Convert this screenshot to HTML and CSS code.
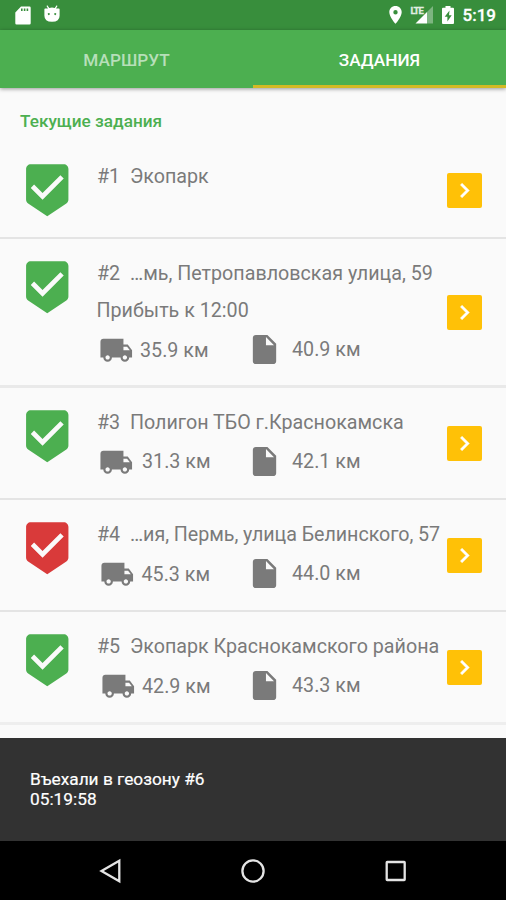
FILE: index.html
```html
<!DOCTYPE html>
<html lang="ru">
<head>
<meta charset="utf-8">
<title>Задания</title>
<link rel="stylesheet" href="styles.css">
</head>
<body>
<svg class="defs" width="0" height="0">
  <symbol id="badge" viewBox="0 0 24 24"><path d="M19 1H5c-1.1 0-1.99.9-1.99 2L3 15.93c0 .69.35 1.3.88 1.66L12 23l8.11-5.41c.53-.36.88-.97.88-1.66L21 3c0-1.1-.9-2-2-2zm-9 15l-5-5 1.41-1.41L10 13.17l7.59-7.59L19 7l-9 9z"/></symbol>
  <symbol id="truck" viewBox="0 0 24 24"><path d="M20 8h-3V4H3c-1.100 0-2 .9-2 2v11h2c0 1.660 1.340 3 3 3s3-1.340 3-3h6c0 1.660 1.340 3 3 3s3-1.340 3-3h2v-5l-3-4zM6 18.500c-.83 0-1.500-.67-1.500-1.500s.67-1.500 1.500-1.500 1.500.67 1.500 1.500-.67 1.500-1.500 1.500zm13.500-9l1.960 2.500H17V9.500h2.500zm-1.500 9c-.83 0-1.500-.67-1.500-1.500s.67-1.500 1.500-1.500 1.500.67 1.500 1.500-.67 1.500-1.500 1.500z"/></symbol>
  <symbol id="file" viewBox="0 0 24 24"><path d="M6 2c-1.100 0-1.990.9-1.990 2L4 20c0 1.100.89 2 1.990 2H18c1.100 0 2-.9 2-2V8l-6-6H6zm7 7V3.500L18.500 9H13z"/></symbol>
  <symbol id="chevron" viewBox="0 0 24 24"><path d="M10 6L8.590 7.410 13.170 12l-4.580 4.590L10 18l6-6z"/></symbol>
</svg>

<header class="statusbar">
  <div class="status-group status-left">
    <svg width="16" height="19" viewBox="0 0 16 19"><path fill-rule="evenodd" d="M6 0.500h8.500q1.200 0 1.200 1.200v15.600q0 1.200-1.200 1.200h-13q-1.200 0-1.200-1.200V6.500zM6 2.500v2.400h1.600V2.500zM8.800 2.500v2.400h1.600V2.500zM11.600 2.500v2.400h1.600V2.500z"/></svg>
    <svg width="16" height="18" viewBox="0 0 16 18"><path fill-rule="evenodd" d="M3.300 0.300l2 2.700q2.700-.8 5.400 0l2-2.700.8.600-1.500 2.500h2.800q.8 0 .8.800v6.500q0 6-7.600 6T.4 10.700V4.200q0-.8.8-.8H4L2.500.9zM4.800 8a1 1 0 1 0 .01 0zM11.200 8a1 1 0 1 0 .01 0z"/></svg>
  </div>
  <div class="status-group status-right">
    <svg class="pin" width="13" height="18" viewBox="0 0 13 18"><path fill-rule="evenodd" d="M6.500 0C2.900 0 .3 2.700.3 6.200c0 4.600 6.200 11.600 6.200 11.600s6.200-7 6.200-11.600C12.700 2.700 10.100 0 6.500 0zm0 4a2.200 2.200 0 1 1 0 4.400 2.200 2.200 0 0 1 0-4.400z"/></svg>
    <div class="signal">
      <svg width="22" height="18" viewBox="0 0 22 18"><path opacity=".35" d="M22 0v17.500H16V6z"/><path d="M4.500 17.500L16 6v11.500z"/></svg>
      <span class="lte">LTE</span>
    </div>
    <svg class="battery" width="12" height="18" viewBox="0 0 12 18"><path fill-rule="evenodd" d="M3.500 0h5v1.800H11q1 0 1 1V17q0 1-1 1H1q-1 0-1-1V2.800q0-1 1-1h2.500zM7.500 4.500L2.700 10.700h2.700v4.800l4.300-6.200H7z"/></svg>
    <span class="clock">5:19</span>
  </div>
</header>

<nav class="tabs">
  <div class="tab">МАРШРУТ</div>
  <div class="tab active">ЗАДАНИЯ</div>
</nav>

<main class="content">
  <h1 class="heading">Текущие задания</h1>

  <article class="task first">
    <svg class="badge"><use href="#badge"/></svg>
    <div class="body">
      <div class="line"><span class="num">#1</span><span>Экопарк</span></div>
    </div>
    <div class="go"><svg><use href="#chevron"/></svg></div>
  </article>

  <article class="task timed">
    <svg class="badge"><use href="#badge"/></svg>
    <div class="body">
      <div class="line"><span class="num">#2</span><span>…мь, Петропавловская улица, 59</span></div>
      <div class="line arrival">Прибыть к 12:00</div>
      <div class="metrics"><div class="metric m2"><svg class="truck"><use href="#truck"/></svg><span>35.9 км</span></div><div class="metric doc"><svg><use href="#file"/></svg><span>40.9 км</span></div></div>
    </div>
    <div class="go"><svg><use href="#chevron"/></svg></div>
  </article>

  <article class="task">
    <svg class="badge"><use href="#badge"/></svg>
    <div class="body">
      <div class="line"><span class="num">#3</span><span>Полигон ТБО г.Краснокамска</span></div>
      <div class="metrics"><div class="metric m3"><svg class="truck"><use href="#truck"/></svg><span>31.3 км</span></div><div class="metric doc"><svg><use href="#file"/></svg><span>42.1 км</span></div></div>
    </div>
    <div class="go"><svg><use href="#chevron"/></svg></div>
  </article>

  <article class="task late">
    <svg class="badge"><use href="#badge"/></svg>
    <div class="body">
      <div class="line"><span class="num">#4</span><span class="tight">…ия, Пермь, улица Белинского, 57</span></div>
      <div class="metrics"><div class="metric m4"><svg class="truck"><use href="#truck"/></svg><span>45.3 км</span></div><div class="metric doc"><svg><use href="#file"/></svg><span>44.0 км</span></div></div>
    </div>
    <div class="go"><svg><use href="#chevron"/></svg></div>
  </article>

  <article class="task last">
    <svg class="badge"><use href="#badge"/></svg>
    <div class="body">
      <div class="line"><span class="num">#5</span><span>Экопарк Краснокамского района</span></div>
      <div class="metrics"><div class="metric m5"><svg class="truck"><use href="#truck"/></svg><span>42.9 км</span></div><div class="metric doc"><svg><use href="#file"/></svg><span>43.3 км</span></div></div>
    </div>
    <div class="go"><svg><use href="#chevron"/></svg></div>
  </article>
</main>

<aside class="snackbar"><p>Въехали в геозону #6<br>05:19:58</p></aside>

<footer class="navbar">
  <svg viewBox="0 0 28 28"><path d="M22.300 3.800v20.400L4.500 14z"/></svg>
  <svg viewBox="0 0 28 28"><circle cx="14" cy="14" r="10.600"/></svg>
  <svg viewBox="0 0 28 28"><rect x="5.700" y="5" width="18" height="18" rx=".5"/></svg>
</footer>
</body>
</html>
```
FILE: styles.css
```css
* { box-sizing: border-box; }
body {
  margin: 0;
  width: 506px;
  height: 900px;
  overflow: hidden;
  display: flex;
  flex-direction: column;
  background: #fafafa;
  color: #7a7a7a;
  font-family: Roboto, "Liberation Sans", sans-serif;
}
svg { display: block; flex: none; fill: currentColor; }
.defs { position: absolute; }

.statusbar {
  flex: none;
  height: 30px;
  padding: 0 10px 0 15px;
  display: flex;
  justify-content: space-between;
  align-items: center;
  background: #388e3c;
  color: #fff;
}
.status-group { display: flex; align-items: center; }
.status-left { gap: 13px; }
.status-left svg:last-child { margin-top: -2px; }
.pin { margin-right: 9px; }
.signal { position: relative; margin-right: 9px; }
.lte {
  position: absolute;
  left: 0;
  top: 0;
  font-size: 9.5px;
  line-height: 10px;
  font-weight: 700;
  letter-spacing: -1px;
  opacity: .85;
  -webkit-text-stroke: .3px #fff;
}
.battery { margin-right: 9px; }
.clock { font-size: 17px; font-weight: 500; line-height: 32px; -webkit-text-stroke: .3px #fff; }

.tabs {
  flex: none;
  height: 58px;
  display: flex;
  background: #4caf50;
  box-shadow: 0 1px 4px rgba(0, 0, 0, .4);
}
.tab {
  flex: 1;
  text-align: center;
  font-size: 17.2px;
  font-weight: 500;
  line-height: 60px;
  color: #b7dfb9;
}
.tab.active { color: #fff; border-bottom: 3px solid #d4ba24; }

.content { flex: none; height: 650px; }
.heading {
  margin: 0;
  height: 54px;
  padding: 16px 20px 0;
  font-size: 17.2px;
  line-height: 34px;
  font-weight: 500;
  color: #4caf50;
}
.task {
  display: flex;
  height: 112px;
  padding: 16px 24px 0 20px;
  border-bottom: 2px solid #e4e4e4;
}
.task.first { height: 97px; }
.task.timed { height: 149px; border-bottom-width: 3px; border-bottom-color: #e9e9e9; }
.task.last { height: 113px; border-bottom-width: 3px; border-bottom-color: #eee; }
.badge { width: 56.5px; height: 56.5px; margin: 4px 21px 0 -1px; color: #4caf50; }
.late .badge { color: #d93a3a; }
.body { flex: 1; min-width: 0; padding-left: .5px; font-size: 19.7px; white-space: nowrap; }
.line { display: flex; height: 37px; line-height: 37px; }
.num { flex: none; width: 33px; }
.tight { letter-spacing: -.05px; }
.arrival { margin-left: -.5px; }
.metrics { display: flex; height: 40px; line-height: 40px; }
.metric { display: flex; align-items: center; width: 150px; }
.metric svg { width: 35px; height: 35px; }
.metric span { margin-top: 1px; }
.metric .truck { width: 34.5px; height: 34.5px; margin: 2px 7px 0 1.5px; }
.metric.m2 span { margin-top: 3px; }
.m3 span, .m4 span { margin-left: 2px; }
.metric.m4 span, .metric.m5 span { margin-top: 3px; }
.metric.m4 .truck { margin-left: 2.5px; margin-right: 5.5px; }
.metric.m5 .truck { margin-left: 3.5px; margin-right: 6px; }
.m5 span { margin-left: 1px; }
.metric.doc span { margin-left: 10px; margin-top: 2px; }
.go {
  flex: none;
  align-self: center;
  width: 35px;
  height: 35px;
  margin-top: -15px;
  border-radius: 2px;
  background: #ffc107;
  color: #fff;
  display: grid;
  place-items: center;
}
.timed .go { margin-top: -15px; }
.go svg { width: 29px; height: 29px; stroke: #fff; stroke-width: .4; }

.snackbar {
  flex: none;
  height: 103px;
  padding: 32px 30px 0;
  background: #323232;
  color: #fff;
  font-size: 17.3px;
  line-height: 19.5px;
  -webkit-text-stroke: .2px #fff;
}
.snackbar p { margin: 0; }
.navbar {
  flex: 1;
  display: flex;
  justify-content: center;
  align-items: center;
  gap: 114px;
  background: #000;
}
.navbar svg { width: 28px; height: 28px; fill: none; stroke: #e4e4e4; stroke-width: 2.300; }
```
